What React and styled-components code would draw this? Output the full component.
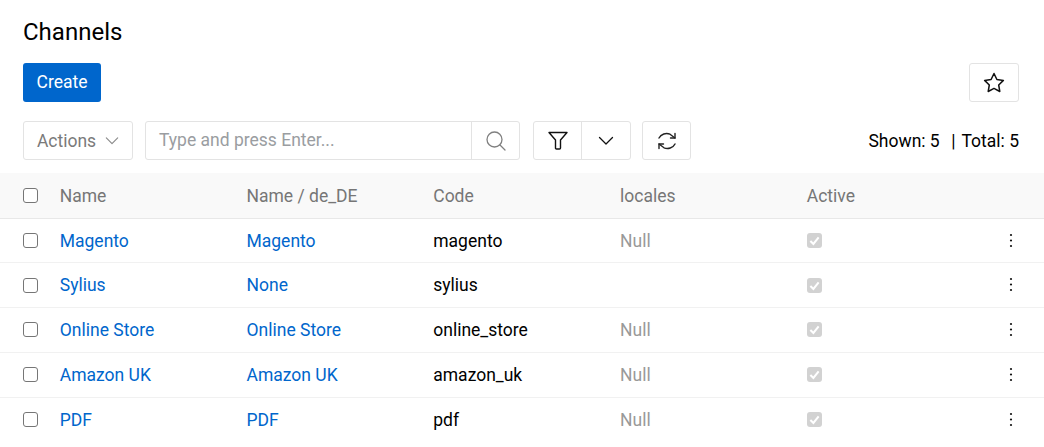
import React from 'react';
import styled, { createGlobalStyle } from 'styled-components';

const Global = createGlobalStyle`
  html, body { margin: 0; padding: 0; background: #fff; overflow: hidden; }
  body { font-family: Roboto, "Liberation Sans", sans-serif; font-size: 17.5px; color: #000; }
  * { box-sizing: border-box; }
`;
const Page = styled.div`width: 1044px; height: 447px; overflow: hidden; padding-top: 15px;`;
const Title = styled.h1`margin: 0 0 14px 23px; font-size: 24px; font-weight: 400; line-height: 34px; color: #000;`;
const TopRow = styled.div`display: flex; justify-content: space-between; align-items: center; padding: 0 25px 0 23px; height: 39px;`;
const Primary = styled.button`height: 39px; width: 78px; border: 0; border-radius: 3px; background: #0066cc; color: #fff; font: 400 17.5px Roboto, sans-serif; padding: 0 0 2px;`;
const OutlineBtn = styled.button`height: 39px; width: ${p => p.$w}px; display: flex; align-items: center; justify-content: center; gap: 9px; padding: 0; background: #fff; border: 1px solid #e3e3e3; border-radius: 3px; color: ${p => p.$muted ? '#7a7a7a' : '#000'}; font: 400 17.5px Roboto, sans-serif;`;
const Toolbar = styled.div`display: flex; align-items: center; padding: 0 25px 0 23px; margin-top: 19px; height: 39px;`;
const Search = styled.div`display: flex; width: 375px; height: 39px; margin-left: 12px; border: 1px solid #e3e3e3; border-radius: 3px;`;
const SearchText = styled.div`flex: 1; padding-left: 13px; line-height: 36px; color: #9a9da1; border-right: 1px solid #e3e3e3;`;
const SearchIcon = styled.div`width: 47px; display: flex; align-items: center; justify-content: center;`;
const Group = styled.div`display: flex; width: 98px; height: 39px; margin-left: 13px; border: 1px solid #e3e3e3; border-radius: 3px;`;
const GroupCell = styled.div`flex: ${p => p.$first ? '0 0 48px' : 1}; display: flex; align-items: center; justify-content: center; ${p => p.$first && 'border-right: 1px solid #e3e3e3;'}`;
const Refresh = styled(OutlineBtn)`margin-left: 11px;`;
const Totals = styled.div`margin-left: auto; display: flex; color: #000;`;
const Sep = styled.span`margin: 0 6px 0 11.5px;`;
const Row = styled.div`display: grid; grid-template-columns: 59.75px repeat(5, 186.75px) 1fr; align-items: center; height: ${p => p.$h}px; border-bottom: ${p => p.$line ? `1px solid ${p.$line}` : '0'};`;
const Head = styled(Row)`margin-top: 13px; padding-top: 1px; background: #f9f9f9; color: #767676;`;
const BoxCell = styled.div`display: flex; padding-left: 23px;`;
const Box = styled.span`width: 15px; height: 15px; border: 1.5px solid #767676; border-radius: 3px; background: #fff;`;
const Link = styled.span`color: #0066cc;`;
const Null = styled.span`color: #999;`;
const Check = styled.span`width: 15px; height: 15px; border-radius: 3px; background: #d2d2d2; display: flex; align-items: center; justify-content: center;`;
const Kebab = styled.div`display: flex; justify-content: flex-end; padding-right: 31px; margin-top: -1px;`;

const Chevron = ({ w = 14, color = '#000', sw = 1.3 }) => (
  <svg width={w} height={w} viewBox="0 0 16 16" fill="none" stroke={color} strokeWidth={sw} strokeLinecap="round" strokeLinejoin="round"><path d="M1.500 4.500 8 11l6.500-6.500" /></svg>
);

const rows = [
  ['Magento', 'Magento', 'magento', 'Null'],
  ['Sylius', 'None', 'sylius', ''],
  ['Online Store', 'Online Store', 'online_store', 'Null'],
  ['Amazon UK', 'Amazon UK', 'amazon_uk', 'Null'],
  ['PDF', 'PDF', 'pdf', 'Null'],
];

export default function App() {
  return (
    <Page>
      <Global />
      <Title>Channels</Title>
      <TopRow>
        <Primary>Create</Primary>
        <OutlineBtn $w={50}>
          <svg width="22" height="21" viewBox="0 0 22 21" fill="none" stroke="#111" strokeWidth="1.500" strokeLinejoin="round"><path d="M11 1.500l2.900 6 6.500.9-4.700 4.600 1.100 6.500L11 16.400l-5.800 3.100 1.100-6.500L1.600 8.400l6.500-.9z" /></svg>
        </OutlineBtn>
      </TopRow>
      <Toolbar>
        <OutlineBtn $w={110} $muted>Actions <Chevron color="#8a8a8a" /></OutlineBtn>
        <Search>
          <SearchText>Type and press Enter...</SearchText>
          <SearchIcon>
            <svg width="20" height="20" viewBox="0 0 20 20" fill="none" stroke="#808080" strokeWidth="1.300" strokeLinecap="round"><circle cx="8.500" cy="8.500" r="7.500" /><path d="M14 14l5 5" /></svg>
          </SearchIcon>
        </Search>
        <Group>
          <GroupCell $first>
            <svg width="20" height="19" viewBox="0 0 20 19" fill="none" stroke="#111" strokeWidth="1.400" strokeLinejoin="round"><path d="M1 1.500h18l-6.500 7.500v8c0 .6-.4 1-1 1h-3c-.6 0-1-.4-1-1V9z" /></svg>
          </GroupCell>
          <GroupCell><Chevron w={16} color="#111" /></GroupCell>
        </Group>
        <Refresh $w={49}>
          <svg width="20" height="20" viewBox="0 0 20 20" fill="none" stroke="#222" strokeWidth="1.400" strokeLinecap="round" strokeLinejoin="round"><path d="M2 7C4 3 9 1.500 13 3.200L18 7" /><path d="M18 2.500V7h-4.500" /><path d="M18 13C16 17 11 18.500 7 16.800L2 13" /><path d="M2 17.500V13h4.500" /></svg>
        </Refresh>
        <Totals><span>Shown: 5</span><Sep>|</Sep><span>Total: 5</span></Totals>
      </Toolbar>
      <Head $h={45.78} $line="#e8e8e8">
        <BoxCell><Box /></BoxCell>
        <div>Name</div><div>Name / de_DE</div><div>Code</div><div>locales</div><div>Active</div><div />
      </Head>
      {rows.map((r, i) => (
        <Row key={r[2]} $h={44.7} $line={i < 4 ? '#f1f1f1' : ''}>
          <BoxCell><Box /></BoxCell>
          <Link>{r[0]}</Link>
          <Link>{r[1]}</Link>
          <div>{r[2]}</div>
          <Null>{r[3]}</Null>
          <div><Check>
            <svg width="11" height="11" viewBox="0 0 12 12" fill="none" stroke="#fff" strokeWidth="2.200"><path d="M1.500 6.500 4.800 9.800 10.500 2.500" /></svg>
          </Check></div>
          <Kebab>
            <svg width="4" height="15" viewBox="0 0 4 15" fill="#111"><circle cx="2" cy="2" r="1.100" /><circle cx="2" cy="7.500" r="1.100" /><circle cx="2" cy="13" r="1.100" /></svg>
          </Kebab>
        </Row>
      ))}
    </Page>
  );
}
